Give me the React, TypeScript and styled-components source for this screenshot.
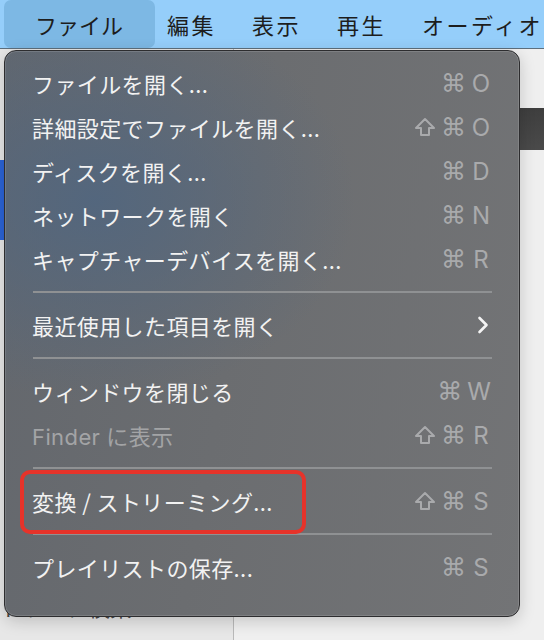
import React from 'react';
import styled, { createGlobalStyle } from 'styled-components';

const GlobalStyle = createGlobalStyle`
  html, body {
    margin: 0;
    padding: 0;
    background: #ececec;
  }
  body {
    font-family: "Noto Sans CJK JP", "Noto Sans", sans-serif;
  }
`;

const Page = styled.div`
  position: relative;
  width: 544px;
  height: 640px;
  overflow: hidden;
  background: #ededed;
`;

const MenuBar = styled.div`
  display: flex;
  align-items: stretch;
  height: 48px;
  padding-left: 4px;
  background: #95cefa;
  border-bottom: 1px solid #5d6f7d;
`;

const MenuTitle = styled.div<{ active?: boolean }>`
  display: flex;
  align-items: center;
  padding: ${(p) => (p.active ? '0 32px 0 31px' : '0 18px')};
  margin-right: ${(p) => (p.active ? '-6px' : '0')};
  border-radius: ${(p) => (p.active ? '7px' : '0')};
  background: ${(p) => (p.active ? '#7db8e4' : 'transparent')};
  font-size: 22px;
  letter-spacing: ${(p) => (p.active ? '0' : '2.5px')};
  color: #1d1d1d;
  white-space: nowrap;
`;

const Workspace = styled.div`
  display: flex;
  height: 591px;
`;

const Sidebar = styled.div`
  display: flex;
  flex-direction: column;
  width: 233px;
  border-right: 1px solid #b9b9b9;
  background: #e7e7e7;
`;

const SidebarRow = styled.div<{ selected?: boolean }>`
  height: ${(p) => (p.selected ? '80px' : 'auto')};
  background: ${(p) => (p.selected ? '#2b63d6' : 'transparent')};
`;

const SidebarSpacer = styled.div<{ h: number }>`
  height: ${(p) => p.h}px;
`;

const SidebarText = styled.div`
  margin-left: -44px;
  font-size: 22px;
  line-height: 30px;
  color: #4a4a4a;
  white-space: nowrap;
`;

const Content = styled.div`
  flex: 1;
  display: flex;
  flex-direction: column;
  background: #efefef;
`;

const Toolbar = styled.div`
  margin-top: 59px;
  height: 42px;
  background: linear-gradient(#3e3e3e, #4a4a4a);
`;

const Menu = styled.div`
  position: absolute;
  left: 4px;
  top: 50px;
  width: 514px;
  height: 546px;
  padding: 10px 0 9px;
  border: 1px solid #2d2d2f;
  border-radius: 12px;
  background:
    radial-gradient(ellipse 260px 200px at 90px 150px, rgba(80, 102, 128, 0.85), rgba(80, 102, 128, 0) 100%),
    linear-gradient(100deg, #63676d 0%, #6b6d70 45%, #737476 100%);
  box-shadow: 0 4px 16px rgba(0, 0, 0, 0.18), inset 0 0 0 1px rgba(255, 255, 255, 0.12);
  display: flex;
  flex-direction: column;
`;

const Item = styled.div<{ disabled?: boolean; marked?: boolean }>`
  position: relative;
  display: flex;
  align-items: center;
  justify-content: space-between;
  height: 44px;
  padding: 0 28px 0 27px;
  font-size: 22px;
  color: ${(p) => (p.disabled ? '#a3a4a6' : '#f2f2f2')};
  white-space: nowrap;

  &::after {
    content: '';
    display: ${(p) => (p.marked ? 'block' : 'none')};
    position: absolute;
    left: 15px;
    top: -9px;
    width: 278px;
    height: 56px;
    border: 4px solid #e6332a;
    border-radius: 10px;
  }
`;

const Label = styled.span`
  letter-spacing: 0.4px;
`;

const Latin = styled.span`
  font-family: "Inter", "Noto Sans", sans-serif;
  margin-right: 6px;
`;

const Shortcut = styled.span`
  display: flex;
  align-items: center;
  gap: 5px;
  color: #a9aaac;
`;

const Command = styled.span`
  font-family: "DejaVu Sans", sans-serif;
  font-size: 25px;
  line-height: 1;
`;

const Key = styled.span`
  font-family: "Inter", "Noto Sans", sans-serif;
  font-size: 24px;
  min-width: 20px;
  text-align: center;
`;

const Separator = styled.div`
  height: 22px;
  display: flex;
  align-items: center;
  padding: 0 27px 0 28px;

  &::before {
    content: '';
    flex: 1;
    height: 2px;
    background: #8f9193;
  }
`;

const ShiftIcon = () => (
  <svg width="22" height="20" viewBox="0 0 22 20">
    <path
      d="M11 2 L20 11 L15 11 L15 18 L7 18 L7 11 L2 11 Z"
      fill="none"
      stroke="#a9aaac"
      strokeWidth="2"
      strokeLinejoin="round"
    />
  </svg>
);

const Chevron = () => (
  <svg width="12" height="18" viewBox="0 0 12 18" style={{ marginRight: 2 }}>
    <path d="M2.5 2 L9.5 9 L2.5 16" fill="none" stroke="#f4f4f4" strokeWidth="2.6" strokeLinecap="round" strokeLinejoin="round" />
  </svg>
);

type Entry =
  | { sep: true }
  | { sep?: false; label: React.ReactNode; shift?: boolean; key?: string; sub?: boolean; disabled?: boolean; marked?: boolean };

const entries: Entry[] = [
  { label: 'ファイルを開く...', key: 'O' },
  { label: '詳細設定でファイルを開く...', shift: true, key: 'O' },
  { label: 'ディスクを開く...', key: 'D' },
  { label: 'ネットワークを開く', key: 'N' },
  { label: 'キャプチャーデバイスを開く...', key: 'R' },
  { sep: true },
  { label: '最近使用した項目を開く', sub: true },
  { sep: true },
  { label: 'ウィンドウを閉じる', key: 'W' },
  { label: <><Latin>Finder</Latin>に表示</>, shift: true, key: 'R', disabled: true },
  { sep: true },
  { label: '変換 / ストリーミング...', shift: true, key: 'S', marked: true },
  { sep: true },
  { label: 'プレイリストの保存...', key: 'S' },
];

const titles = ['編集', '表示', '再生', 'オーディオ'];

export default function App() {
  return (
    <>
      <GlobalStyle />
      <Page>
        <MenuBar>
          <MenuTitle active>ファイル</MenuTitle>
          {titles.map((t) => (
            <MenuTitle key={t}>{t}</MenuTitle>
          ))}
        </MenuBar>
        <Workspace>
          <Sidebar>
            <SidebarSpacer h={111} />
            <SidebarRow selected />
            <SidebarSpacer h={351} />
            <SidebarRow>
              <SidebarText>ネットワーク検索</SidebarText>
            </SidebarRow>
          </Sidebar>
          <Content>
            <Toolbar />
          </Content>
        </Workspace>
        <Menu>
          {entries.map((e, i) =>
            e.sep ? (
              <Separator key={i} />
            ) : (
              <Item key={i} disabled={e.disabled} marked={e.marked}>
                <Label>{e.label}</Label>
                {e.sub ? (
                  <Chevron />
                ) : (
                  <Shortcut>
                    {e.shift && <ShiftIcon />}
                    <Command>⌘</Command>
                    <Key>{e.key}</Key>
                  </Shortcut>
                )}
              </Item>
            )
          )}
        </Menu>
      </Page>
    </>
  );
}
